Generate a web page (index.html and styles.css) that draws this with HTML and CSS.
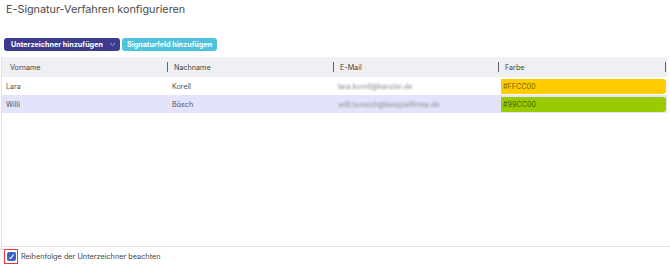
FILE: index.html
```html
<html>
<head>
    <meta charset="utf-8">
    <link rel="stylesheet" href="styles.css">
</head>
<body>
    <h1 class="title">E-Signatur-Verfahren konfigurieren</h1>
    <div class="toolbar">
        <button class="btn btn-primary">Unterzeichner hinzufügen
            <svg class="chevron" width="7" height="5" viewBox="0 0 7 5"><path d="M1 1.2 L3.5 3.6 L6 1.2" fill="none" stroke="#b9b8e6" stroke-width="0.9"/></svg>
        </button>
        <button class="btn btn-secondary">Signaturfeld hinzufügen</button>
    </div>
    <div class="grid">
        <div class="row head">
            <div class="cell">Vorname</div>
            <div class="cell sep">Nachname</div>
            <div class="cell sep">E-Mail</div>
            <div class="cell sep last">Farbe</div>
        </div>
        <div class="row">
            <div class="cell">Lara</div>
            <div class="cell">Korell</div>
            <div class="cell"><span class="blur">lara.korell@kanzlei.de</span></div>
            <div class="cell"><span class="swatch yellow">#FFCC00</span></div>
        </div>
        <div class="row selected">
            <div class="cell">Willi</div>
            <div class="cell">Bösch</div>
            <div class="cell"><span class="blur">willi.boesch@beispielfirma.de</span></div>
            <div class="cell"><span class="swatch green">#99CC00</span></div>
        </div>
    </div>
    <div class="footer">
        <label class="check">
            <span class="box-wrap"><span class="box">
                <svg width="7" height="7" viewBox="0 0 7 7"><path d="M1.3 4.6 L2.6 5.6 L5.7 1.5" fill="none" stroke="#fff" stroke-width="1.1"/></svg>
            </span></span>
            Reihenfolge der Unterzeichner beachten
        </label>
    </div>
</body>
</html>
```

FILE: styles.css
```css
body{
    margin: 0;
    width: 670px;
    height: 267px;
    font-family: Inter, "Noto Sans", sans-serif;
    color: #3a3a3a;
    background: #fff;
    display: flex;
    flex-direction: column;
}

.title{
    margin: 3px 0 0 6px;
    font-size: 10.8px;
    font-weight: 400;
    line-height: 14px;
    color: #4a4a4a;
}

.toolbar{
    display: flex;
    gap: 2px;
    margin: 21px 0 0 4px;
}

.btn{
    height: 13px;
    border: none;
    border-radius: 3px;
    padding: 0 0 0 7px;
    font-family: Inter, sans-serif;
    font-size: 7.2px;
    font-weight: 700;
    color: #fff;
    white-space: nowrap;
    display: flex;
    align-items: center;
    gap: 6px;
}

.btn-primary{
    background: #3d3b8e;
    width: 116px;
}

.btn-secondary{
    background: #4ec3dd;
    width: 95px;
    padding: 0 0 0 5px;
}

.grid{
    margin: 6px 0 0 1px;
    height: 189px;
    border: 1px solid #e2e2e2;
    border-right: none;
    border-top: none;
}

.row{
    display: grid;
    grid-template-columns: 166px 166px 165px 167px;
    height: 18px;
    align-items: center;
    font-size: 7.2px;
    color: #555;
}

.row .cell{
    padding-left: 4px;
    height: 100%;
    display: flex;
    align-items: center;
}

.row.head{
    height: 20px;
    background: #eff0f3;
    color: #444;
    width: 665px;
}

.row.head .cell{
    padding-left: 8px;
}

.row.head .sep{
    position: relative;
    padding-left: 6px;
}

.row.head .sep::before{
    content: "";
    position: absolute;
    left: -1px;
    top: 5px;
    height: 10px;
    border-left: 1px solid #666;
}

.row.head .last::after{
    content: "";
    position: absolute;
    right: 0;
    top: 5px;
    height: 10px;
    border-left: 1px solid #666;
}

.row.selected{
    background: #e3e3fb;
    width: 665px;
}

.blur{
    color: #888;
    filter: blur(1.2px);
}

.swatch{
    display: flex;
    align-items: center;
    width: 164px;
    height: 15px;
    margin-left: -2px;
    padding-left: 2px;
    border-radius: 0 3px 3px 0;
    color: #7a6200;
}

.yellow{ background: #ffcc00; }
.green{ background: #99cc00; color: #4a5f00; }

.footer{
    display: flex;
    align-items: center;
    padding: 2px 0 0 4px;
}

.check{
    display: flex;
    align-items: center;
    gap: 3px;
    font-size: 7.3px;
    color: #444;
}

.box-wrap{
    width: 12px;
    height: 13px;
    border: 1px solid #e33;
    display: flex;
    align-items: center;
    justify-content: center;
}

.box{
    width: 9px;
    height: 9px;
    border-radius: 2px;
    background: #3a62c4;
    display: flex;
    align-items: center;
    justify-content: center;
}
```
